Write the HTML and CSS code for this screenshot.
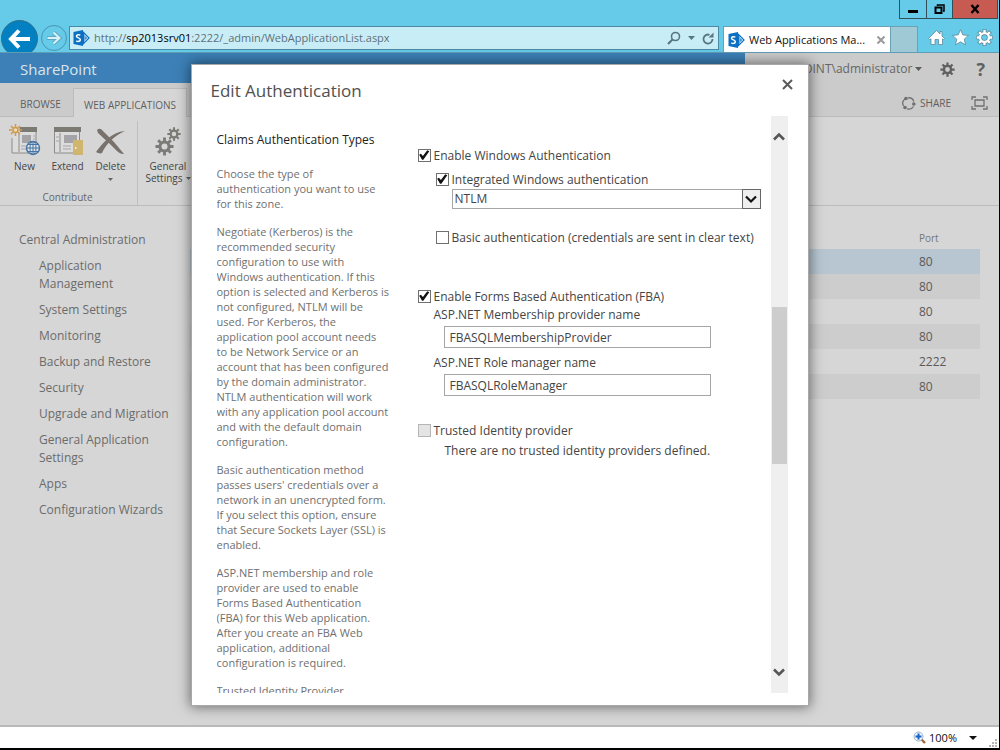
FILE: index.html
```html
<!DOCTYPE html>
<html lang="en">
<head>
<meta charset="utf-8">
<title>Web Applications Management</title>
<link rel="stylesheet" href="styles.css">
</head>
<body>
<svg class="defs" aria-hidden="true">
  <symbol id="sp" viewBox="0 0 16 16">
    <path d="M10 2.5l5.500 5.500-5.500 5.500z" fill="#fff" stroke="#0b6fc2" stroke-width="1.200"/>
    <path d="M10 5l3 3-3 3M10 8h3" fill="none" stroke="#0b6fc2"/>
    <path d="M0 2l9.500-2v16L0 14z" fill="#0b6fc2"/>
    <path d="M6.800 5.300C5.500 4.200 3 4.500 3 6.200 3 8.200 6.800 7.500 6.800 9.700 6.800 11.700 4 11.800 2.800 10.700" fill="none" stroke="#fff" stroke-width="1.500"/>
  </symbol>
  <symbol id="gear" viewBox="0 0 20 20">
    <circle cx="10" cy="10" r="4.800" fill="none" stroke="currentColor" stroke-width="3.200"/>
    <path d="M10 0.500v4M10 15.500v4M0.500 10h4M15.500 10h4M3.300 3.300l2.800 2.800M13.900 13.900l2.800 2.800M3.300 16.700l2.800-2.800M13.900 6.100l2.800-2.800" stroke="currentColor" stroke-width="3"/>
  </symbol>
  <symbol id="gear-line" viewBox="0 0 20 20">
    <path d="M10 0v5M10 15v5M0 10h5M15 10h5M3 3l3.500 3.500M13.500 13.500L17 17M3 17l3.500-3.500M13.500 6.500L17 3" stroke="#53808f" stroke-width="4.400"/>
    <circle cx="10" cy="10" r="5.200" fill="none" stroke="#53808f" stroke-width="4.400"/>
    <path d="M10 0.800v4M10 15.200v4M0.800 10h4M15.200 10h4M3.600 3.600l2.800 2.800M13.600 13.600l2.800 2.800M3.600 16.400l2.800-2.800M13.600 6.400l2.800-2.800" stroke="#fff" stroke-width="2.800"/>
    <circle cx="10" cy="10" r="5.200" fill="none" stroke="#fff" stroke-width="2.800"/>
  </symbol>
</svg>

<header class="chrome">
  <div class="window-buttons">
    <button class="win" aria-label="Minimize"><svg width="10" height="10"><path d="M0 7.500h10" stroke="#000" stroke-width="3"/></svg></button>
    <button class="win win-restore" aria-label="Restore"><svg width="11" height="10"><path d="M3.500 2V1h6.500v6H9" fill="none" stroke="#000" stroke-width="1.500"/><path d="M1.500 3.500h6v5.500h-6z" fill="none" stroke="#000" stroke-width="2"/></svg></button>
    <button class="win win-close" aria-label="Close window"><svg width="10" height="10"><path d="M1.500 1l7 8M8.500 1l-7 8" stroke="#000" stroke-width="2.400"/></svg></button>
  </div>
  <div class="nav-row">
    <button class="back" aria-label="Back"><svg width="24" height="20" viewBox="0 0 24 20"><path d="M3 10h19M11 1.500L3 10l8 8.500" fill="none" stroke="#fff" stroke-width="4"/></svg></button>
    <button class="forward" aria-label="Forward"><svg width="16" height="14" viewBox="0 0 16 14"><path d="M1 7h12M7.500 1.500L13.500 7l-6 5.500" fill="none" stroke="#5aa9c4" stroke-width="4"/><path d="M1.500 7h11.500M7.500 1.500L13.500 7l-6 5.500" fill="none" stroke="#d9f1f8" stroke-width="2"/></svg></button>
    <div class="address">
      <svg width="17" height="16"><use href="#sp"/></svg>
      <span class="url">http://<b>sp2013srv01</b>:2222/_admin/WebApplicationList.aspx</span>
      <button class="plain" aria-label="Search"><svg width="14" height="14"><circle cx="8.500" cy="5.500" r="4" fill="none" stroke="#587681" stroke-width="1.600"/><path d="M5.500 8.500L1 13" stroke="#587681" stroke-width="2.200"/></svg></button>
      <button class="plain" aria-label="Search options"><svg width="7" height="4"><path d="M0 0h7L3.500 4z" fill="#587681"/></svg></button>
      <button class="plain" aria-label="Refresh"><svg width="12" height="13"><path d="M10.500 7A4.500 4.500 0 1 1 7.500 2.800" fill="none" stroke="#587681" stroke-width="1.800"/><path d="M6.500 5.500H11.500V0.500z" fill="#587681"/></svg></button>
    </div>
    <div class="tab">
      <svg width="17" height="16"><use href="#sp"/></svg>
      <span class="tab-title">Web Applications Ma...</span>
      <button class="plain" aria-label="Close tab"><svg width="8" height="8"><path d="M0.500 0.500l7 7M7.500 0.500l-7 7" stroke="#9a9a9a" stroke-width="2"/></svg></button>
    </div>
    <button class="new-tab" aria-label="New tab"></button>
    <div class="chrome-icons">
      <button class="plain" aria-label="Home"><svg width="17" height="17"><path d="M8.500 1.500L12 5V2.500h2V7l2.500 2.500-1 1L14.500 9.800V15.500h-4V10.500h-3.500v5h-4V9.800L1.500 10.500l-1-1z" fill="#fff" stroke="#53808f" stroke-width=".7"/></svg></button>
      <button class="plain" aria-label="Favorites"><svg width="17" height="17"><path d="M8.500 0.700l2.300 5.200 5.700.500-4.300 3.800 1.300 5.600-5-3-5 3 1.300-5.600L.500 6.400l5.700-.500z" fill="#fff" stroke="#53808f" stroke-width=".7"/></svg></button>
      <button class="plain" aria-label="Tools"><svg width="17" height="17"><use href="#gear-line"/></svg></button>
    </div>
  </div>
</header>

<div class="page">
  <div class="suite">
    <div class="brand">SharePoint</div>
    <div class="account">
      <button class="plain user">SHAREPOINT\administrator<svg width="7" height="4"><path d="M0 0h7L3.500 4z" fill="#5c5c5c"/></svg></button>
      <button class="plain gear" aria-label="Settings"><svg width="15" height="15"><use href="#gear"/></svg></button>
      <button class="plain help" aria-label="Help">?</button>
    </div>
  </div>
  <nav class="tabs">
    <button class="rtab">BROWSE</button>
    <button class="rtab rtab-on">WEB APPLICATIONS</button>
    <div class="tools">
      <button class="plain share"><svg width="15" height="15"><path d="M2.500 10A5.500 5.500 0 0 1 4 3M7 1.800A5.500 5.500 0 0 1 12.800 5.500M12.500 10.500A5.500 5.500 0 0 1 6 12.800" fill="none" stroke="#707070" stroke-width="1.300"/><circle cx="5" cy="2.500" r="1.800" fill="#707070"/><circle cx="12.800" cy="8" r="1.800" fill="#707070"/><circle cx="4" cy="11.500" r="1.800" fill="#707070"/></svg>SHARE</button>
      <button class="plain" aria-label="Focus on content"><svg width="17" height="14"><path d="M1 4V1h4M12 1h4v3M16 10v3h-4M5 13H1v-3M4 4h9v6H4z" fill="none" stroke="#707070" stroke-width="1.300"/></svg></button>
    </div>
  </nav>
  <section class="ribbon">
    <div class="group">
      <div class="group-items">
        <button class="cmd"><svg width="32" height="32" viewBox="0 0 32 32"><path d="M3 12v15h24V2H10" fill="#dcdcdc" stroke="#8d8c8a"/><path d="M11 1h17v5H11z" fill="#7b7b74"/><path d="M10 7v19" stroke="#8d8c8a"/><path d="M13 9h9v8h-9z" fill="#a4a3a8"/><path d="M12 20h6M12 23h6M24 10h2M24 13h2" stroke="#a4a3a8"/><circle cx="24" cy="22" r="6.500" fill="#dfe3e8" stroke="#4674a5" stroke-width="1.400"/><ellipse cx="24" cy="22" rx="3" ry="6.500" fill="none" stroke="#4674a5"/><path d="M17.500 22h13M24 15.500v13M19 18.500h10M19 25.500h10" stroke="#4674a5"/><circle cx="6.500" cy="4" r="2.500" fill="#e9dcc0" stroke="#cf9a4d" stroke-width="1.500"/><path d="M6.500-2v3M6.500 7v3M0 4h3M10 4h3M2 0l2 2M9 6l2 2M2 8l2-2M9 2l2-2" stroke="#cf9a4d" stroke-width="1.500"/></svg>New</button>
        <button class="cmd"><svg width="32" height="32" viewBox="0 0 32 32"><path d="M2.500 2v25h25V2z" fill="#dcdcdc" stroke="#8d8c8a"/><path d="M2 1h27v5H2z" fill="#7b7b74"/><path d="M8 7v19" stroke="#8d8c8a"/><path d="M12 9h13v8H12z" fill="#a4a3a8"/><path d="M4 11h3M4 15h3M11 20h8M11 23h8" stroke="#a4a3a8"/><path d="M21 14h10v15H21z" fill="#d0b56f"/><path d="M23 22h1.500" stroke="#fff" stroke-width="1.500"/></svg>Extend</button>
        <button class="cmd"><svg width="32" height="32" viewBox="0 0 32 32"><path d="M2 4c3-3 5 0 8 3s6 6 9 9l10 12c-4 1-9-5-13-9L3 7z" fill="#79726c"/><path d="M30 5C19 10 11 18 7 27c-2 1-4 0-6-1C8 17 16 6 30 5z" fill="#79726c"/></svg>Delete<svg class="drop" width="5" height="3"><path d="M0 0h5L2.500 3z" fill="#666"/></svg></button>
      </div>
      <div class="group-name">Contribute</div>
    </div>
    <div class="group">
      <div class="group-items">
        <button class="cmd"><svg width="32" height="32" viewBox="0 0 32 32"><g color="#7b7b78"><use href="#gear" x="3" y="11" width="19" height="19"/><use href="#gear" x="15" y="1" width="14" height="14"/></g></svg>General<span class="nowrap">Settings <svg width="5" height="3"><path d="M0 0h5L2.500 3z" fill="#666"/></svg></span></button>
      </div>
    </div>
  </section>
  <div class="body">
    <nav class="side">
      <a class="side-head" href="#">Central Administration</a>
      <a href="#">Application<br>Management</a>
      <a href="#">System Settings</a>
      <a href="#">Monitoring</a>
      <a href="#">Backup and Restore</a>
      <a href="#">Security</a>
      <a href="#">Upgrade and Migration</a>
      <a href="#">General Application<br>Settings</a>
      <a href="#">Apps</a>
      <a href="#">Configuration Wizards</a>
    </nav>
    <table class="apps">
      <thead><tr><th></th><th class="port">Port</th></tr></thead>
      <tbody>
        <tr class="picked"><td></td><td>80</td></tr>
        <tr class="alt"><td></td><td>80</td></tr>
        <tr><td></td><td>80</td></tr>
        <tr class="alt"><td></td><td>80</td></tr>
        <tr><td></td><td>2222</td></tr>
        <tr class="alt"><td></td><td>80</td></tr>
      </tbody>
    </table>
  </div>

  <div class="overlay">
    <div class="dialog" role="dialog" aria-labelledby="dlg-title">
      <div class="dialog-head">
        <h1 id="dlg-title">Edit Authentication</h1>
        <button class="plain close" aria-label="Close dialog"><svg width="11" height="11"><path d="M1 1l9 9M10 1l-9 9" stroke="#5a5a5a" stroke-width="2"/></svg></button>
      </div>
      <div class="dialog-body">
        <div class="help-text">
          <h2>Claims Authentication Types</h2>
          <p>Choose the type of<br>authentication you want to use<br>for this zone.</p>
          <p>Negotiate (Kerberos) is the<br>recommended security<br>configuration to use with<br>Windows authentication. If this<br>option is selected and Kerberos is<br>not configured, NTLM will be<br>used. For Kerberos, the<br>application pool account needs<br>to be Network Service or an<br>account that has been configured<br>by the domain administrator.<br>NTLM authentication will work<br>with any application pool account<br>and with the default domain<br>configuration.</p>
          <p>Basic authentication method<br>passes users' credentials over a<br>network in an unencrypted form.<br>If you select this option, ensure<br>that Secure Sockets Layer (SSL) is<br>enabled.</p>
          <p>ASP.NET membership and role<br>provider are used to enable<br>Forms Based Authentication<br>(FBA) for this Web application.<br>After you create an FBA Web<br>application, additional<br>configuration is required.</p>
          <p>Trusted Identity Provider</p>
        </div>
        <form class="fields">
          <label class="check"><input type="checkbox" checked>Enable Windows Authentication</label>
          <div class="nested">
            <label class="check"><input type="checkbox" checked>Integrated Windows authentication</label>
            <div class="select">
              <select aria-label="Integrated Windows authentication type"><option>NTLM</option></select>
              <span class="select-arrow"><svg width="12" height="9"><path d="M1 1.500l5 5 5-5" fill="none" stroke="#111" stroke-width="2.200"/></svg></span>
            </div>
            <label class="check basic"><input type="checkbox">Basic authentication (credentials are sent in clear text)</label>
          </div>
          <label class="check forms"><input type="checkbox" checked>Enable Forms Based Authentication (FBA)</label>
          <div class="provider">
            <label for="member">ASP.NET Membership provider name</label>
            <input id="member" type="text" value="FBASQLMembershipProvider">
            <label for="role">ASP.NET Role manager name</label>
            <input id="role" type="text" value="FBASQLRoleManager">
          </div>
          <label class="check trusted"><input type="checkbox" disabled>Trusted Identity provider</label>
          <p class="note">There are no trusted identity providers defined.</p>
        </form>
        <div class="scroll">
          <button class="plain" aria-label="Scroll up"><svg width="12" height="9"><path d="M1 7.500l5-5 5 5" fill="none" stroke="#555" stroke-width="2.600"/></svg></button>
          <div class="track"><div class="thumb"></div></div>
          <button class="plain" aria-label="Scroll down"><svg width="12" height="9"><path d="M1 1.500l5 5 5-5" fill="none" stroke="#555" stroke-width="2.600"/></svg></button>
        </div>
      </div>
    </div>
  </div>
</div>

<footer class="status">
  <button class="plain zoom"><svg width="13" height="13"><path d="M8.500 8.500l3.500 3.500" stroke="#a0673c" stroke-width="2.400"/><circle cx="5.500" cy="5.500" r="4.500" fill="#eef5fc" stroke="#9cb1c8"/><path d="M5.500 2.500v6M2.500 5.500h6" stroke="#1763c6" stroke-width="2"/></svg>100%</button>
  <button class="plain" aria-label="Zoom level"><svg width="8" height="4"><path d="M0 0h8L4 4z" fill="#111"/></svg></button>
  <svg class="grip" width="8" height="8"><path d="M6 0h2v2H6zM3 3h2v2H3zM6 3h2v2H6zM0 6h2v2H0zM3 6h2v2H3zM6 6h2v2H6z" fill="#b5b5b5"/></svg>
</footer>
</body>
</html>
```
FILE: styles.css
```css
* { box-sizing: border-box; }

body {
  margin: 0;
  height: 100vh;
  display: flex;
  flex-direction: column;
  border-right: 1px solid #000;
  border-bottom: 2px solid #000;
  font: 12px/18px "Open Sans", "Noto Sans", sans-serif;
  color: #444;
  overflow: hidden;
}

svg { display: block; flex: none; overflow: visible; }
.defs { position: absolute; width: 0; height: 0; }
button, input, select { font: inherit; color: inherit; }
button { padding: 0; border: 0; cursor: pointer; }
a { color: inherit; text-decoration: none; }

.plain { display: flex; align-items: center; background: none; }

/* Browser window */
.chrome { background: #66cae9; flex: none; border-bottom: 1px solid #5f9db5; }
.window-buttons { display: flex; justify-content: flex-end; height: 19px; padding-right: 1px; }
.win {
  width: 27px;
  display: flex;
  align-items: center;
  justify-content: center;
  background: none;
  border: 1px solid #33505a;
  border-top: 0;
  border-right: 0;
}
.win-restore { width: 26px; }
.win-close { width: 46px; background: #c75b51; border-right: 1px solid #33505a; }

.nav-row { display: flex; align-items: flex-start; height: 33px; padding-left: 1px; overflow: hidden; }
.back {
  flex: none;
  display: grid;
  place-items: center;
  width: 37px;
  height: 37px;
  margin-top: 1px;
  border: 1px solid #33708a;
  border-radius: 50%;
  background: #0380c2;
}
.forward {
  flex: none;
  display: grid;
  place-items: center;
  width: 26px;
  height: 26px;
  margin: 6px 2px 0 3px;
  border: 1px solid #4796b3;
  border-radius: 50%;
  background: none;
}
.address {
  flex: 1;
  display: flex;
  align-items: center;
  gap: 7px;
  height: 24px;
  margin: 7px 4px 0 0;
  padding: 0 4px 0 3px;
  border: 1px solid #4a8aa3;
  background: #c9edf6;
}
.url { flex: 1; margin-left: -3px; font-size: 11px; color: #5d717a; white-space: nowrap; }
.url b { font-weight: 400; color: #000; }
.tab {
  display: flex;
  align-items: center;
  gap: 4px;
  width: 168px;
  height: 27px;
  margin-top: 7px;
  padding: 0 5px 0 4px;
  border: 1px solid #6ba1b5;
  border-bottom: 0;
  background: #fff;
}
.tab-title { flex: 1; font-size: 11px; color: #111; white-space: nowrap; }
.new-tab { width: 27px; height: 27px; margin-top: 7px; background: #a0c9d6; border: 1px solid #6ba1b5; border-left: 0; border-bottom: 0; }
.chrome-icons { display: flex; gap: 7px; padding: 10px 6px 0 10px; }

/* SharePoint page */
.page {
  flex: 1;
  min-height: 0;
  position: relative;
  display: flex;
  flex-direction: column;
  background: #d6d6d6;
}
.suite { display: flex; height: 30px; flex: none; background: #3c80b7; }
.brand { flex: 1; padding-left: 20px; font-size: 15px; line-height: 32px; color: #dbe4ec; }
.account {
  display: flex;
  align-items: center;
  justify-content: flex-end;
  width: 254px;
  padding: 2px 14px 0 0;
  background: #cbcbcb;
  color: #666;
}
.user { gap: 3px; white-space: nowrap; }
.gear { margin-left: 18px; color: #606060; }
.help { margin-left: 21px; font-size: 18px; font-weight: 700; color: #606060; }

.tabs { display: flex; align-items: stretch; height: 34px; flex: none; background: #cbcbcb; border-bottom: 1px solid #bcbcbc; }
.rtab { margin-top: 5px; padding: 4px 0 0 20px; width: 73px; font-size: 10px; color: #5f5f5f; background: none; text-align: left; white-space: nowrap; }
.rtab-on { width: 114px; height: 29px; padding: 4px 0 0; text-align: center; background: #d6d6d6; border: 1px solid #bcbcbc; border-bottom: 0; }
.tools { flex: 1; display: flex; justify-content: flex-end; gap: 20px; padding: 7px 11px 0 0; }
.share { gap: 4px; font-size: 10px; color: #606060; }

.ribbon { display: flex; flex: none; height: 89px; padding: 4px 0 0; border-bottom: 1px solid #bcbcbc; }
.group { display: flex; flex-direction: column; justify-content: space-between; border-right: 1px solid #bfbfbf; padding: 5px 5px 0 3px; }
.group-items { display: flex; }
.cmd {
  display: flex;
  flex-direction: column;
  align-items: center;
  width: 43px;
  background: none;
  font-size: 10px;
  line-height: 12px;
  color: #444;
}
.cmd > svg:first-child { margin-bottom: 2px; }
.group + .group .cmd { width: 54px; }
.drop { margin-top: 6px; }
.nowrap { display: flex; align-items: center; gap: 3px; white-space: nowrap; }
.group-name { font-size: 10px; line-height: 16px; text-align: center; color: #666; }

.body { flex: 1; display: flex; align-items: flex-start; padding: 25px 19px 0; }
.side { display: flex; flex-direction: column; gap: 8px; width: 171px; padding-left: 20px; color: #6b6b6b; white-space: nowrap; }
.side-head { margin-left: -20px; }
.apps { flex: 1; border-collapse: collapse; color: #5a5a5a; }
.apps th, .apps td { height: 25px; padding: 0; text-align: left; }
.apps th { height: 18px; padding-bottom: 4px; font-size: 10px; line-height: 14px; font-weight: 400; color: #777; }
.apps .port { width: 61px; }
.picked { background: #b7c6d1; }
.alt { background: #cdcdcd; }

/* Dialog */
.overlay { position: absolute; inset: 0; display: flex; justify-content: center; padding: 11px 0 19px; }
.dialog {
  width: 618px;
  display: flex;
  flex-direction: column;
  padding: 0 20px 12px 25px;
  background: #fff;
  border: 1px solid #a8a8a8;
  box-shadow: 0 0 12px 1px rgba(0, 0, 0, .5);
}
.dialog-head { display: flex; justify-content: space-between; align-items: flex-start; height: 51px; flex: none; margin-left: -6px; }
h1 { margin: 14px 0 0; font-size: 17px; line-height: 24px; font-weight: 400; color: #505050; }
.close { margin: 13px -6px 0 0; width: 12px; height: 12px; }
.close { margin-right: -6px; }
.dialog-body { flex: 1; min-height: 0; display: grid; grid-template-columns: 201px 1fr 17px; }
.help-text { overflow: hidden; font-size: 11px; line-height: 15px; color: #707070; white-space: nowrap; }
.help-text h2 { margin: 15px 0 17px; font-size: 12px; line-height: 18px; font-weight: 400; color: #222; }
.help-text p { margin: 0 0 13px; }
.fields { padding-top: 31px; min-width: 0; }
.check { display: flex; align-items: center; gap: 3px; white-space: nowrap; }
.check input {
  appearance: none;
  flex: none;
  width: 13px;
  height: 13px;
  margin: 0 0 2px;
  border: 1px solid #707070;
  background: #fff;
}
.check input:checked::before {
  content: "";
  display: block;
  width: 11px;
  height: 11px;
  background: #111;
  clip-path: polygon(6% 48%, 22% 38%, 40% 60%, 80% 6%, 98% 16%, 44% 94%, 32% 94%);
}
.check input:disabled { border-color: #b5b5b5; background: #e4e4e4; }
.nested { padding: 6px 10px 0 18px; }
.select { position: relative; margin-left: 16px; }
.select select {
  appearance: none;
  display: block;
  width: 100%;
  height: 20px;
  padding: 0 22px 0 2px;
  border: 1px solid #a6a6a6;
  border-radius: 0;
  background: #fff;
  line-height: 18px;
}
.select-arrow {
  position: absolute;
  top: 0;
  right: 0;
  width: 19px;
  height: 20px;
  display: grid;
  place-items: center;
  border: 1px solid #666;
  background: #eee;
  pointer-events: none;
}
.basic { margin-top: 20px; }
.forms { margin-top: 41px; }
.provider { display: flex; flex-direction: column; padding: 0 60px 0 26px; }
.provider label { margin-left: -10px; }
.provider input { width: 100%; height: 22px; margin: 2px 0 6px; padding: 0 5px; border: 1px solid #a6a6a6; }
.trusted { margin-top: 20px; }
.note { margin: 2px 0 0 27px; white-space: nowrap; }
.scroll { display: flex; flex-direction: column; background: #efefef; }
.scroll .plain { justify-content: center; height: 41px; }
.track { flex: 1; padding: 150px 1px 0; }
.thumb { height: 157px; background: #cdcdcd; }

/* Status bar */
.status {
  flex: none;
  display: flex;
  align-items: center;
  justify-content: flex-end;
  gap: 12px;
  height: 23px;
  padding-right: 2px;
  border-top: 2px solid #b9b9b9;
  background: #fff;
  color: #111;
}
.zoom { gap: 3px; font-size: 11px; }
.grip { align-self: flex-end; margin-bottom: 1px; }
```
